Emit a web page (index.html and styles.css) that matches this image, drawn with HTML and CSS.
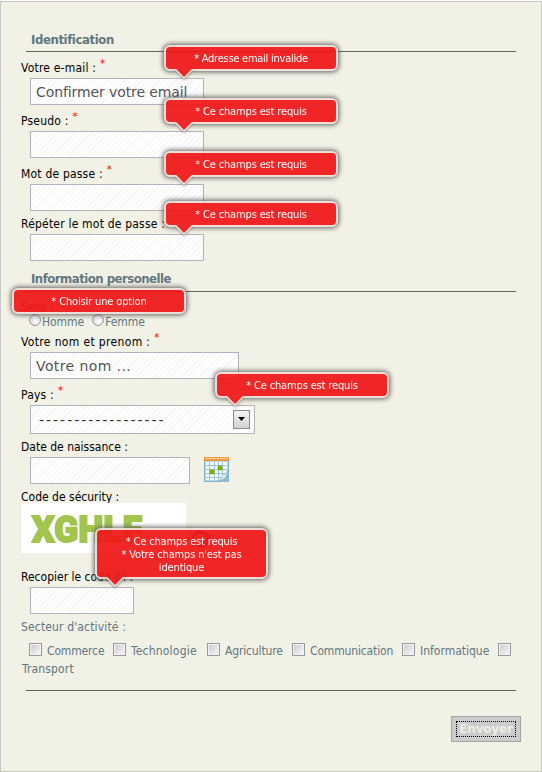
FILE: index.html
```html
<!DOCTYPE html>
<html lang="fr">
<head>
<meta charset="utf-8">
<title>Inscription</title>
<link rel="stylesheet" href="styles.css">
</head>
<body>
<form class="form">
  <h2 class="legend">Identification</h2>
  <div class="field">
    <label class="label required"><span>Votre e-mail :</span><sup>*</sup></label>
    <div class="input wide">Confirmer votre email</div>
    <div class="tip over-wide"><span class="tight">* Adresse email invalide</span><svg class="arrow" width="20" height="11" viewBox="0 0 20 11"><path d="M1 0 10 9 19 0" /></svg></div>
  </div>
  <div class="field">
    <label class="label required"><span>Pseudo :</span><sup>*</sup></label>
    <div class="input wide"></div>
    <div class="tip over-wide"><span>* Ce champs est requis</span><svg class="arrow" width="20" height="11" viewBox="0 0 20 11"><path d="M1 0 10 9 19 0" /></svg></div>
  </div>
  <div class="field">
    <label class="label required"><span>Mot de passe :</span><sup>*</sup></label>
    <div class="input wide"></div>
    <div class="tip over-wide"><span>* Ce champs est requis</span><svg class="arrow" width="20" height="11" viewBox="0 0 20 11"><path d="M1 0 10 9 19 0" /></svg></div>
  </div>
  <div class="field">
    <label class="label"><span>Répéter le mot de passe :</span></label>
    <div class="input wide"></div>
    <div class="tip over-wide"><span>* Ce champs est requis</span><svg class="arrow" width="20" height="11" viewBox="0 0 20 11"><path d="M1 0 10 9 19 0" /></svg></div>
  </div>

  <h2 class="legend second">Information personelle</h2>
  <div class="field gender">
    <div class="gender-title">Sexe :</div>
    <div class="radios">
      <label><i class="radio"></i>Homme</label>
      <label><i class="radio"></i>Femme</label>
    </div>
    <div class="tip over-gender"><span>* Choisir une option</span></div>
  </div>
  <div class="field">
    <label class="label required loose"><span>Votre nom et prenom :</span><sup>*</sup></label>
    <div class="input name">Votre nom ...</div>
  </div>
  <div class="field">
    <label class="label required"><span>Pays :</span><sup>*</sup></label>
    <div class="input select"><span class="dashes">------------------</span><span class="drop"><svg width="9" height="5" viewBox="0 0 9 5"><path d="M1 0h7L4.500 4z"/></svg></span></div>
    <div class="tip over-select"><span>* Ce champs est requis</span><svg class="arrow" width="20" height="11" viewBox="0 0 20 11"><path d="M1 0 10 9 19 0" /></svg></div>
  </div>
  <div class="field">
    <label class="label snug"><span>Date de naissance :</span></label>
    <div class="row">
      <div class="input date"></div>
      <svg class="calendar" width="26" height="26" viewBox="0 0 26 26">
        <rect x=".5" y=".5" width="24" height="24" fill="#b5d6e2" stroke="#7fb0c5"/>
        <rect x="2" y="5" width="21" height="18" fill="#f4fafc"/>
        <rect x="0" y="0" width="25" height="4" fill="#ee9a45"/>
        <rect x="1" y="1" width="23" height="1" fill="#fbcf98"/>
        <path d="M2 8.500h21M2 12.500h21M2 16.500h21M2 20.500h17M5.500 5v18M10.500 5v18M14.500 5v18M18.500 5v13" stroke="#a3c3d0" fill="none"/>
        <path d="M14 9h4v4h-4zM6 13h4v4H6z" fill="#7fba00" stroke="#5f9400" stroke-width=".5"/>
        <path d="M15 25c2-2 3-4 3-7 3 0 5-1 7-4v11z" fill="#8dbdd2"/>
        <path d="M14 24c3-1 4-3 4-6 3 0 4-2 6-5-1 6-3 10-10 11z" fill="#e4f1f6" stroke="#79a7bb" stroke-width=".6"/>
      </svg>
    </div>
  </div>
  <div class="field">
    <label class="label snug captcha-label"><span>Code de sécurity :</span></label>
    <div class="row">
      <div class="captcha"><span>XGHLF</span></div>
      <svg class="refresh" width="22" height="22" viewBox="0 0 22 22"><path d="M3 9a8 8 0 0 1 15-1M17 12a6 6 0 0 1-11 2"/><path class="head" d="M21 5v8h-8zM2 19v-8h8z"/></svg>
    </div>
  </div>
  <div class="field">
    <label class="label snug copy-label"><span>Recopier le code ici :</span></label>
    <div class="input code"></div>
    <div class="tip over-code"><span>* Ce champs est requis<br>* Votre champs n'est pas<br>identique</span><svg class="arrow" width="20" height="11" viewBox="0 0 20 11"><path d="M1 0 10 9 19 0" /></svg></div>
  </div>

  <div class="sector-title">Secteur d'activité :</div>
  <div class="checks">
    <i class="box"></i><span class="w1">Commerce</span><i class="box"></i><span class="w2">Technologie</span><i class="box"></i><span class="w3">Agriculture</span><i class="box"></i><span class="w4">Communication</span><i class="box"></i><span class="w5">Informatique</span><i class="box"></i>
  </div>
  <div class="last-sector">Transport</div>
  <div class="rule"></div>
  <button class="send" type="button"><span>Envoyer</span></button>
</form>
</body>
</html>
```
FILE: styles.css
```css
* { box-sizing: border-box; }
body {
  margin: 0;
  padding-top: 1px;
  background: #fbfbf7;
  font: 12px "DejaVu Sans Condensed", "DejaVu Sans", sans-serif;
  font-stretch: condensed;
  letter-spacing: -0.15px;
  color: #000;
}
.form {
  width: 542px;
  height: 771px;
  padding: 0 20px;
  border: 1px solid #c9c9c9;
  background: #f1f1e5;
}
.legend {
  display: flex;
  align-items: flex-end;
  width: 490px;
  height: 50px;
  margin: 0 0 0 5px;
  padding: 0 0 4px 5px;
  border-bottom: 1px solid #66645a;
  font-size: 13px;
  line-height: 14px;
  letter-spacing: -0.4px;
  color: #627780;
}
.legend.second { height: 31px; padding-bottom: 5px; letter-spacing: -0.5px; }
.field { position: relative; }
.label {
  display: flex;
  align-items: flex-end;
  height: 23px;
  line-height: 20px;
  letter-spacing: 0.2px;
  white-space: nowrap;
}
.label.required { height: 26px; }
.label.loose { letter-spacing: 0.35px; }
.label.snug { letter-spacing: 0; }
.label sup {
  align-self: flex-start;
  margin-left: 4px;
  font-size: 11px;
  line-height: 24px;
  color: #f00;
}
.label.captcha-label { height: 19px; line-height: 12px; }
.label.copy-label { height: 34px; }
.input {
  height: 27px;
  margin-left: 9px;
  padding-left: 5px;
  border: 1px solid #b1b1c0;
  background: repeating-linear-gradient(135deg, #fff 0 3px, #f5f5f7 3px 4px);
  font: 14px/26px "DejaVu Sans", sans-serif;
  letter-spacing: -0.1px;
  color: #555;
  white-space: nowrap;
}
.wide { width: 174px; }
.name { width: 209px; letter-spacing: 0.4px; }
.date { width: 160px; }
.code { width: 104px; }
.select {
  display: flex;
  align-items: center;
  justify-content: space-between;
  width: 225px;
  height: 29px;
  padding: 0 4px 0 8px;
  color: #333;
}
.dashes { letter-spacing: 1.98px; }
.drop {
  display: flex;
  align-items: center;
  justify-content: center;
  width: 17px;
  height: 19px;
  border: 1px solid #8b8b8b;
  background: linear-gradient(#f3f3f3, #d2d2d2);
}
.row { display: flex; }
.calendar { margin-left: 14px; }
.captcha {
  width: 165px;
  height: 50px;
  padding-left: 11px;
  background: #fff;
  overflow: hidden;
}
.captcha span {
  display: inline-block;
  font: 900 37px/54px Roboto, sans-serif;
  letter-spacing: 0.3px;
  color: #a2c550;
  -webkit-text-stroke: 2px #a2c550;
  transform: scaleX(.95);
  transform-origin: left;
}
.refresh { margin: 26px 0 0 4px; fill: none; stroke: #46606c; stroke-width: 3; }
.refresh .head { fill: #46606c; stroke: none; }
.tip {
  position: absolute;
  z-index: 2;
  width: 174px;
  min-height: 26px;
  padding: 5px 0 4px;
  border: 2px solid #efdcd6;
  border-radius: 6px;
  background: #f01718;
  box-shadow: 0 0 5px 1px #555;
  opacity: .93;
  font-size: 11px;
  line-height: 13px;
  text-align: center;
  color: #fff;
}
.tight { letter-spacing: -0.25px; }
.over-wide { left: 143px; bottom: 34px; }
.over-gender { left: -9px; top: -4px; }
.over-select { left: 194px; bottom: 36px; }
.over-code { left: 74px; bottom: 35px; width: 173px; height: 51px; }
.arrow {
  position: absolute;
  left: 8px;
  bottom: -11px;
  fill: #f01718;
  stroke: #efdcd6;
  stroke-width: 1.6;
  filter: drop-shadow(0 1px 1px #888);
}
.gender { height: 34px; color: #627780; }
.gender-title { padding-top: 8px; line-height: 14px; color: #3a474d; }
.radios { display: flex; gap: 8px; padding-left: 8px; line-height: 16px; letter-spacing: -0.05px; }
.radios label { display: flex; }
.radio {
  width: 12px;
  height: 12px;
  margin-right: 1px;
  border: 1px solid #999;
  border-radius: 50%;
  background: radial-gradient(circle at 60% 60%, #fff, #cfcfd3);
}
.sector-title { padding-top: 5px; line-height: 16px; letter-spacing: 0.15px; color: #627780; }
.checks { display: flex; height: 24px; padding: 8px 0 0 8px; line-height: 17px; color: #627780; }
.checks span { padding-left: 5px; white-space: nowrap; }
.box {
  flex: none;
  width: 13px;
  height: 13px;
  border: 1px solid #999;
  background: linear-gradient(135deg, #c8c8ce, #fafafa);
  box-shadow: inset 0 0 0 1px #f3f3f3;
}
.w1 { width: 71px; }
.w2 { width: 81px; letter-spacing: 0.2px; }
.w3 { width: 72px; }
.w4 { width: 97px; }
.w5 { width: 83px; letter-spacing: 0; }
.last-sector { height: 31px; padding-left: 1px; line-height: 20px; letter-spacing: 0.15px; color: #627780; }
.rule { width: 490px; height: 1px; margin-left: 5px; background: #66645a; }
.send {
  display: block;
  width: 70px;
  height: 26px;
  margin: 25px 0 0 430px;
  padding: 4px;
  border: 1px solid #a5a5a5;
  background: #ccc;
}
.send span {
  display: block;
  height: 16px;
  border: 1px dotted #000;
  font: bold 12px/15px "DejaVu Sans", sans-serif;
  letter-spacing: -0.2px;
  color: #ecece4;
}
```
